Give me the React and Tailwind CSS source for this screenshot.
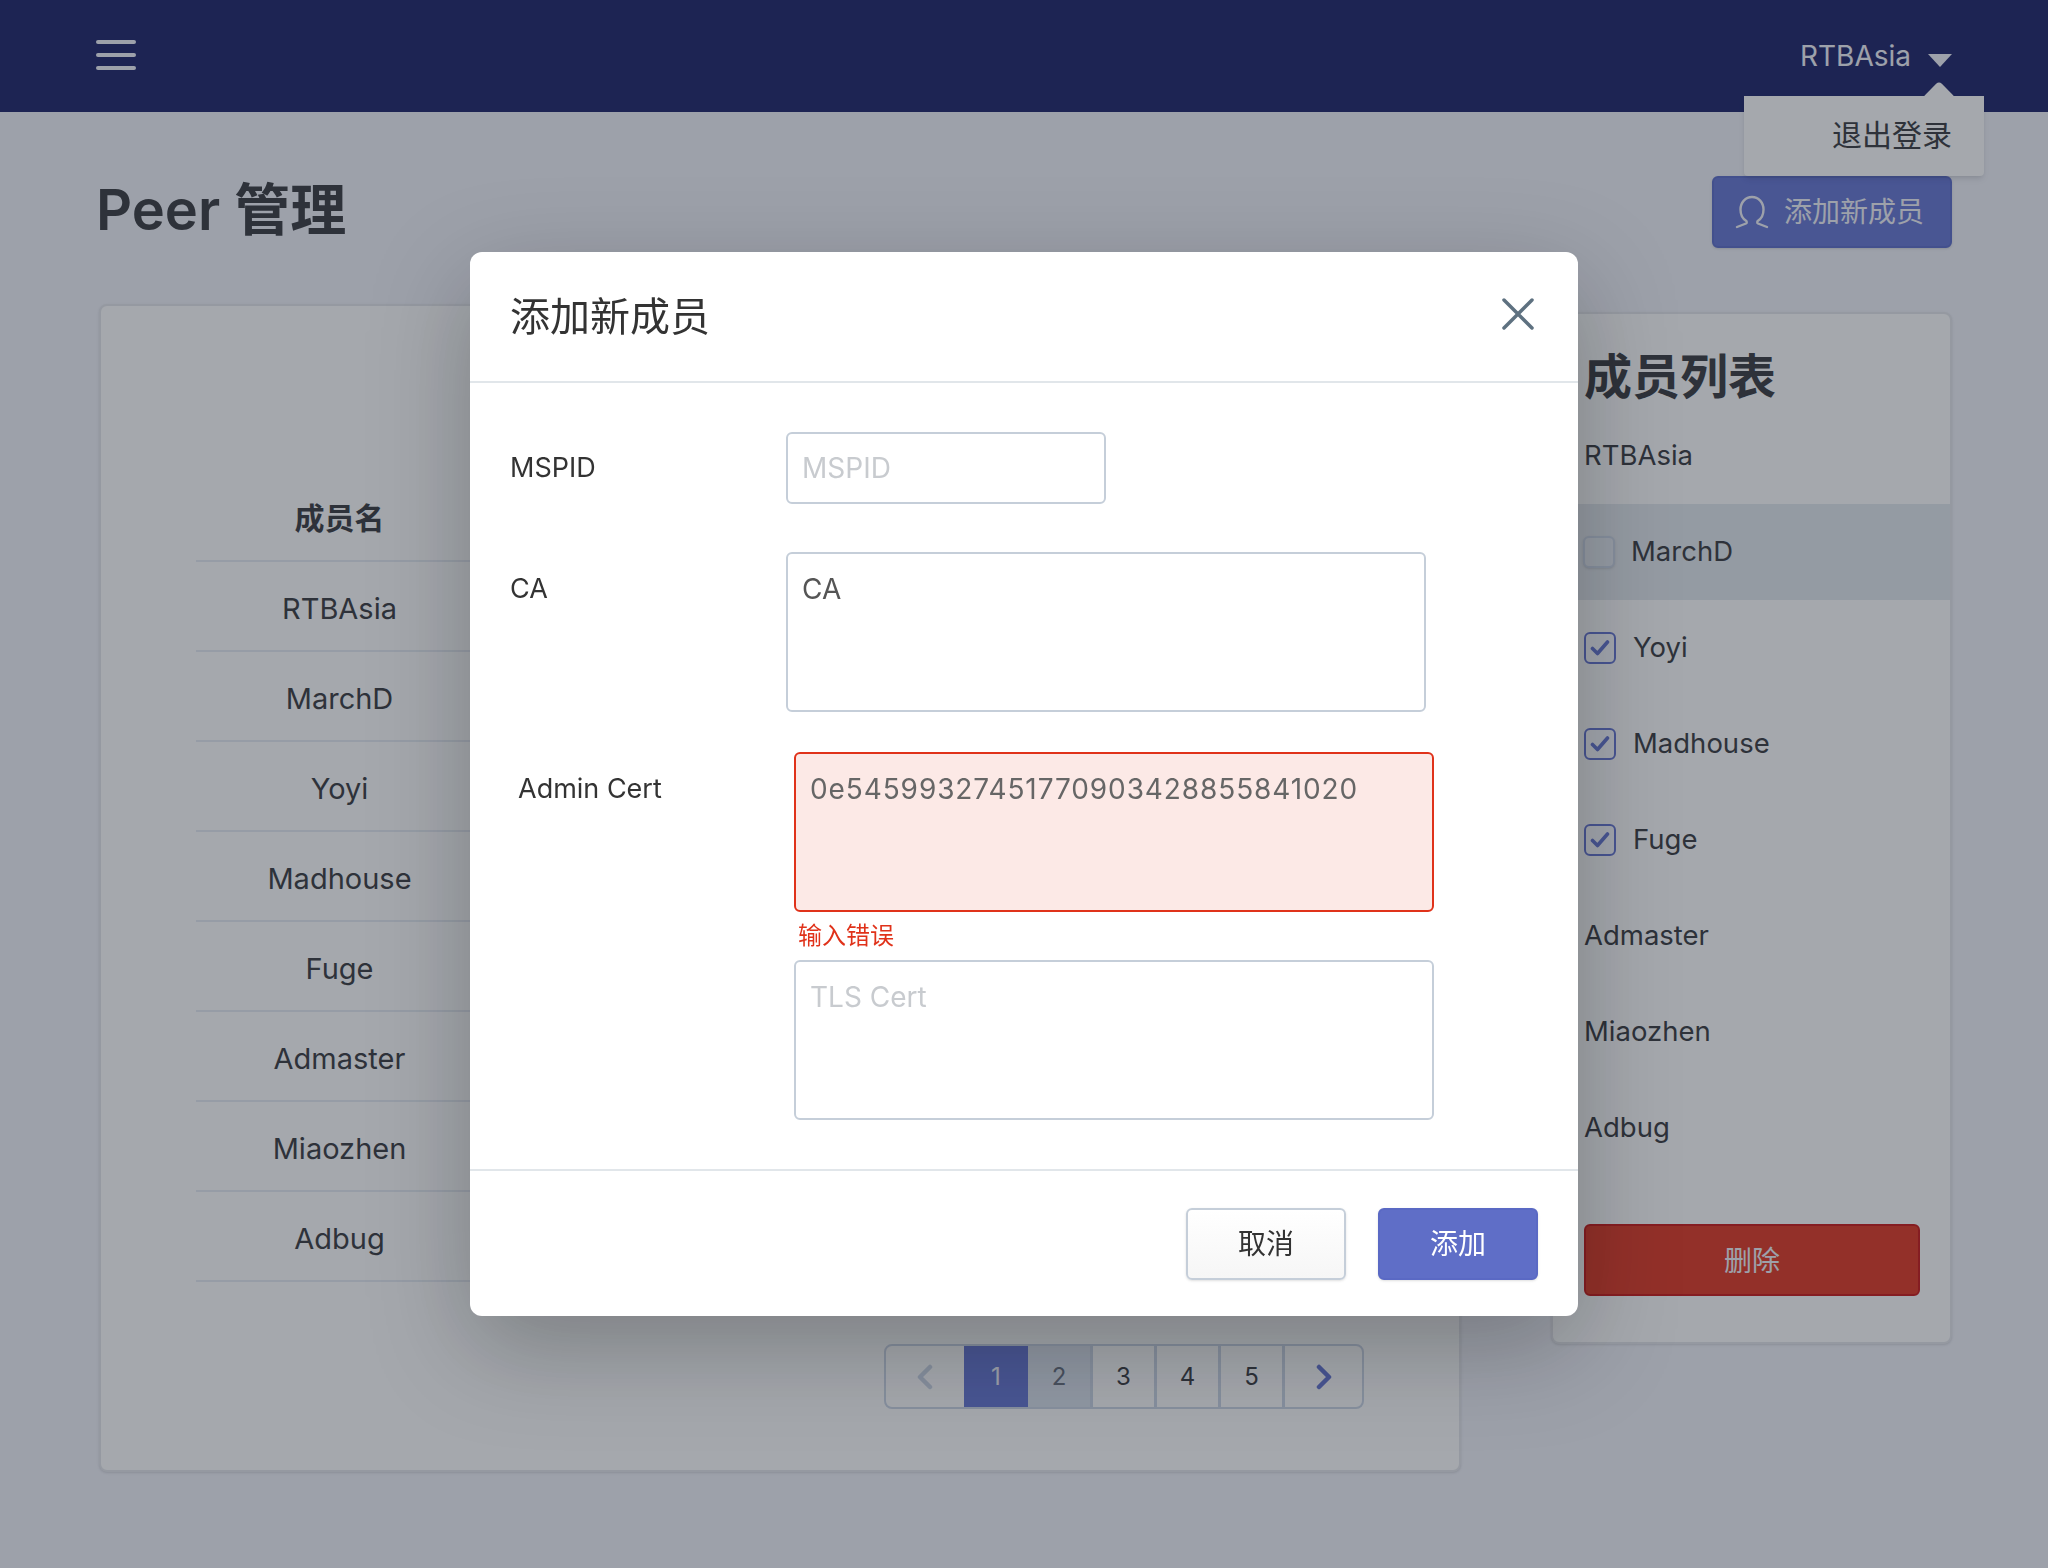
const tableRows = ["RTBAsia", "MarchD", "Yoyi", "Madhouse", "Fuge", "Admaster", "Miaozhen", "Adbug"];

const members = [
  { name: "RTBAsia" },
  { name: "MarchD", hover: true },
  { name: "Yoyi", checked: true },
  { name: "Madhouse", checked: true },
  { name: "Fuge", checked: true },
  { name: "Admaster" },
  { name: "Miaozhen" },
  { name: "Adbug" },
];

function PersonIcon() {
  return (
    <svg width="34" height="34" viewBox="0 0 34 34" fill="none" stroke="currentColor" strokeWidth="2.4" strokeLinecap="round">
      <path d="M2 32l9-3.500c1-.5 1-2 0-2.800C7.500 23.500 5.500 19.500 5.500 14.500 5.500 7.500 10.500 2 17 2s11.500 5.500 11.500 12.500c0 5-2 9-5.500 11.200-1 .8-1 2.300 0 2.800l9 3.500" />
    </svg>
  );
}

function Checkbox({ hover }) {
  if (hover) {
    return <span className="w-8 h-8 -ml-[1px] rounded-md border-2 border-[#c5ced9] bg-[#dfe3e4] shadow-sm"></span>;
  }
  return (
    <span className="w-8 h-8 rounded-md border-2 border-[#5f6ec7] bg-[#f5f5f4] flex items-center justify-center">
      <svg width="20" height="18" viewBox="0 0 20 18" fill="none" stroke="#5f6ec7" strokeWidth="3.6" strokeLinecap="round" strokeLinejoin="round">
        <path d="M2.500 9.500l5 5L17.500 3" />
      </svg>
    </span>
  );
}

function Pagination() {
  const cell = "w-16 h-full flex items-center justify-center border-l-[3px] border-[#c5ced9]";
  return (
    <div className="flex justify-end mt-[62px]">
      <div className="flex h-[65px] w-[480px] rounded-lg border-2 border-[#c5ced9] overflow-hidden text-2xl text-[#333]">
        <div className="w-[78px] flex items-center justify-center">
          <svg width="16" height="26" viewBox="0 0 16 26" fill="none" stroke="#c5ced9" strokeWidth="4.500" strokeLinecap="round" strokeLinejoin="round">
            <path d="M13 3L3 13l10 10" />
          </svg>
        </div>
        <div className="w-16 h-full flex items-center justify-center bg-[#5f6ec7] text-[#e9e9ee]">1</div>
        <div className="w-[62px] h-full flex items-center justify-center bg-[#d5dbe1] text-[#5f6670]">2</div>
        <div className={cell}>3</div>
        <div className={cell}>4</div>
        <div className={cell}>5</div>
        <div className="flex-1 flex items-center justify-center border-l-[3px] border-[#c5ced9]">
          <svg width="16" height="26" viewBox="0 0 16 26" fill="none" stroke="#5f6ec7" strokeWidth="4.500" strokeLinecap="round" strokeLinejoin="round">
            <path d="M3 3l10 10L3 23" />
          </svg>
        </div>
      </div>
    </div>
  );
}

function AddMemberModal() {
  return (
    <div className="fixed inset-0 z-20 bg-[rgba(40,50,70,0.4)] flex justify-center items-start pt-[252px]">
      <div className="w-[1108px] h-[1064px] bg-white rounded-xl shadow-[0_30px_100px_rgba(0,0,0,0.26)] flex flex-col text-[#333]">
        <div className="h-[131px] border-b-2 border-[#e1e6ea] pl-10 pr-[44px] flex items-center justify-between">
          <h3 className="text-[40px] leading-[56px]">添加新成员</h3>
          <svg width="32" height="32" viewBox="0 0 32 32" fill="none" stroke="#5e7180" strokeWidth="3.500" strokeLinecap="round" className="-mt-[6px]">
            <path d="M2 2l28 28M30 2L2 30" />
          </svg>
        </div>

        <div className="flex-1 pl-10 pt-[49px] text-[28px]">
          <div className="flex items-center h-[72px]">
            <label className="w-[276px] text-[27px]">MSPID</label>
            <input
              placeholder="MSPID"
              className="w-[320px] h-[72px] px-[14px] rounded-md border-2 border-[#c5ced9] placeholder:text-[#c8cbcf] outline-none"
            />
          </div>
          <div className="flex mt-[48px]">
            <label className="w-[276px] pt-[17px] leading-10 text-[27px]">CA</label>
            <textarea
              readOnly
              defaultValue="CA"
              className="w-[640px] h-[160px] px-[14px] pt-[15px] leading-10 rounded-md border-2 border-[#c5ced9] text-[#555] resize-none outline-none"
            />
          </div>
          <div className="flex mt-[40px] ml-[8px]">
            <label className="w-[276px] pt-[17px] leading-10 text-[27px]">Admin Cert</label>
            <div>
              <textarea
                readOnly
                defaultValue="0e54599327451770903428855841020"
                className="block w-[640px] h-[160px] px-[14px] pt-[15px] leading-10 tracking-[0.9px] rounded-md border-2 border-[#e0321a] bg-[#fce9e6] text-[#666] resize-none outline-none"
              />
              <p className="h-12 pl-1 text-2xl leading-[48px] text-[#e0321a]">输入错误</p>
              <textarea
                placeholder="TLS Cert"
                readOnly
                className="block w-[640px] h-[160px] px-[14px] pt-[15px] leading-10 rounded-md border-2 border-[#c5ced9] placeholder:text-[#c8cbcf] resize-none outline-none"
              />
            </div>
          </div>
        </div>

        <div className="h-[147px] border-t-2 border-[#e1e6ea] pr-10 pt-[37px] flex justify-end gap-8 text-[28px]">
          <button className="w-40 h-[72px] rounded-md border-2 border-[#c5ced9] bg-gradient-to-b from-white to-[#f6f6f6] shadow-sm">取消</button>
          <button className="w-40 h-[72px] rounded-md border-2 border-[#5a69c4] bg-[#5f6ec7] text-white shadow-sm">添加</button>
        </div>
      </div>
    </div>
  );
}

export default function App() {
  return (
    <div className="relative min-h-screen bg-[#ebebed] text-[#333] text-[28px] font-[Inter,'Noto_Sans_CJK_SC',sans-serif]">
      <header className="relative h-[112px] bg-[#161c5d] flex justify-between px-24 text-[#ebebed]">
        <div className="pt-[40px] flex flex-col gap-[9px]">
          <span className="block w-10 h-1 rounded-full bg-[#ebebed]"></span>
          <span className="block w-10 h-1 rounded-full bg-[#ebebed]"></span>
          <span className="block w-10 h-1 rounded-full bg-[#ebebed]"></span>
        </div>
        <div className="pt-[38px] h-9 flex items-start gap-[17px] leading-9">
          <span>RTBAsia</span>
          <svg width="24" height="13" viewBox="0 0 24 13" fill="#ebebed" className="mt-4">
            <path d="M0 0h24L12 13z" />
          </svg>
        </div>

        <div className="absolute top-[96px] right-16 w-[240px] h-20 z-10 bg-[#f8f7f2] rounded-b shadow-md flex items-center justify-end pr-[32px] pb-[2px] text-[30px] text-[#333]">
          <span className="absolute -top-[10px] right-[33px] w-6 h-6 rotate-45 rounded-sm bg-[#f8f7f2]"></span>
          <span className="relative">退出登录</span>
        </div>
      </header>

      <main className="pl-[99px] pr-24">
        <div className="flex justify-between items-center pt-16 -ml-[3px]">
          <h1 className="text-[56px] leading-[72px] font-semibold -mt-[5px]">Peer 管理</h1>
          <button className="w-[240px] h-[72px] rounded-md border-2 border-[#5565bd] bg-[#5f6ec7] text-[#ebebed] flex items-center pl-[21px] gap-[15px] shadow-sm">
            <PersonIcon />
            添加新成员
          </button>
        </div>

        <div className="flex justify-between items-start mt-[56px]">
          <section className="w-[1362px] h-[1168px] bg-[#f8f7f2] rounded-lg border-2 border-[#dedede] shadow-sm px-[95px] pt-[171px] text-[29px]">
            <table className="w-full">
              <thead>
                <tr className="border-b-2 border-[#dfe3e6]">
                  <th className="w-[287px] h-[84px] font-semibold text-[30px]">成员名</th>
                  <th></th>
                </tr>
              </thead>
              <tbody>
                {tableRows.map((name) => (
                  <tr key={name} className="border-b-2 border-[#dfe3e6]">
                    <td className="h-[90px] pt-[6px] text-center">{name}</td>
                    <td></td>
                  </tr>
                ))}
              </tbody>
            </table>
            <Pagination />
          </section>

          <section className="w-[401px] h-[1032px] mt-2 bg-[#f8f7f2] rounded-lg border-2 border-[#dedede] shadow-sm text-[27.5px]">
            <h2 className="h-[94px] pl-[31px] pt-[31px] text-5xl leading-16 font-semibold">成员列表</h2>
            {members.map((m) => (
              <div
                key={m.name}
                className={m.hover ? "h-24 pl-[31px] flex items-center gap-[16px] bg-[#dde1e1]" : "h-24 pl-[31px] flex items-center gap-[17px]"}
              >
                {(m.checked || m.hover) && <Checkbox hover={m.hover} />}
                <span>{m.name}</span>
              </div>
            ))}
            <button className="block ml-[31px] mt-12 w-[336px] h-[72px] pt-[2px] rounded-md border-2 border-[#c4100a] bg-[#da3017] text-[28px] text-[#ebebed]">删除</button>
          </section>
        </div>
      </main>

      <AddMemberModal />
    </div>
  );
}
